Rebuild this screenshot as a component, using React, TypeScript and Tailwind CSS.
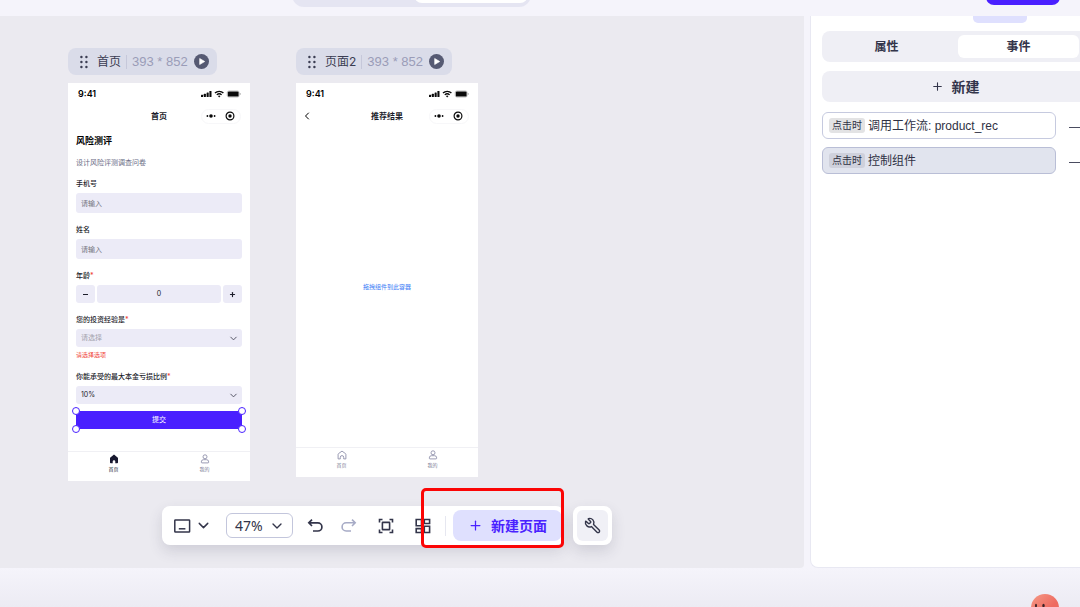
import { ChevronDown, ChevronLeft, Plus, Wrench } from "lucide-react";
import clsx from "clsx";

interface PhoneProps {
  title: string;
  back?: boolean;
  homeActive?: boolean;
  children: React.ReactNode;
}

interface PageChipProps {
  name: string;
}

interface FieldProps {
  id: string;
  label: string;
  required?: boolean;
  children: React.ReactNode;
}

const events = [
  { id: "workflow", trigger: "点击时", label: "调用工作流: product_rec", active: false },
  { id: "control", trigger: "点击时", label: "控制组件", active: true },
];

function SignalIcons() {
  return (
    <svg width="40" height="8" viewBox="0 0 40 8" fill="#0a0a0a" aria-hidden="true">
      <rect x="0" y="4.8" width="2.1" height="2.2" rx=".5" />
      <rect x="2.8" y="3.8" width="2.1" height="3.2" rx=".5" />
      <rect x="5.6" y="2.4" width="2.1" height="4.6" rx=".5" />
      <rect x="8.4" y="1" width="2.1" height="6" rx=".5" />
      <path d="M14 3.1a6 6 0 0 1 8.4 0" fill="none" stroke="#0a0a0a" strokeWidth="1.4" />
      <path d="M15.8 4.9a3.4 3.4 0 0 1 4.8 0" fill="none" stroke="#0a0a0a" strokeWidth="1.3" />
      <path d="M16.9 6l1.3 1.4L19.5 6a1.9 1.9 0 0 0-2.6 0z" />
      <rect x="26.2" y=".9" width="12" height="6.2" rx="1.8" fill="none" stroke="#a3a3a3" strokeWidth=".6" />
      <rect x="26.8" y="1.4" width="10.8" height="5.2" rx="1.2" />
      <rect x="38.8" y="3" width=".8" height="2" rx=".4" fill="#a3a3a3" />
    </svg>
  );
}

function Capsule() {
  return (
    <div className="h-[15px] w-10 flex items-center justify-around rounded-full border border-[#f7f7f9] bg-white">
      <svg width="10" height="10" viewBox="0 0 10 10" fill="#0a0a0a" aria-hidden="true">
        <circle cx="1.4" cy="5" r=".9" />
        <circle cx="5" cy="5" r="1.8" />
        <circle cx="8.6" cy="5" r=".9" />
      </svg>
      <svg width="10" height="10" viewBox="0 0 10 10" aria-hidden="true">
        <circle cx="5" cy="5" r="3.9" fill="none" stroke="#0a0a0a" strokeWidth="1.2" />
        <circle cx="5" cy="5" r="1.7" fill="#0a0a0a" />
      </svg>
    </div>
  );
}

function HomeIcon({ active }: { active?: boolean }) {
  return (
    <svg width="10" height="10" viewBox="0 0 10 10" aria-hidden="true">
      {active ? (
        <path d="M5 .6 1.4 3.4a1 1 0 0 0-.4.8v4.2a.8.8 0 0 0 .8.8h1.9V7.5a1.3 1.3 0 0 1 2.6 0v1.7h1.9a.8.8 0 0 0 .8-.8V4.2a1 1 0 0 0-.4-.8z" fill="#17182f" />
      ) : (
        <path
          d="M5 1.1 1.4 3.7a.8.8 0 0 0-.3.6v4.6h2.2V7.3a1.7 1.7 0 0 1 3.4 0v1.6h2.2V4.3a.8.8 0 0 0-.3-.6z"
          fill="none"
          stroke="#8f90aa"
          strokeWidth=".9"
          strokeLinejoin="round"
        />
      )}
    </svg>
  );
}

function UserIcon() {
  return (
    <svg width="10" height="10" viewBox="0 0 10 10" fill="none" stroke="#8f90aa" strokeWidth=".9" aria-hidden="true">
      <circle cx="5" cy="2.8" r="2" />
      <path d="M3.5 5.7h3a2.2 2.2 0 0 1 2.2 2.2v.3a.7.7 0 0 1-.7.7H2a.7.7 0 0 1-.7-.7v-.3a2.2 2.2 0 0 1 2.2-2.2z" />
    </svg>
  );
}

function PageChip({ name }: PageChipProps) {
  return (
    <div className="h-[27px] self-start flex items-center rounded-lg bg-[#dadce9] px-2 text-[12px] leading-4">
      <svg width="16" height="16" viewBox="0 0 16 16" fill="#3b3d52" aria-hidden="true">
        {[3, 8, 13].map((y) => (
          <g key={y}>
            <circle cx="5.4" cy={y} r="1.2" />
            <circle cx="10.4" cy={y} r="1.2" />
          </g>
        ))}
      </svg>
      <span className="ml-[5px] text-[#3b3d52]">{name}</span>
      <span className="mx-[5px] h-[14px] w-px bg-[#c6c8da]" />
      <span className="text-[#9a9cb8] font-['Liberation_Sans'] text-[13px]">393 * 852</span>
      <button type="button" aria-label="预览" className="ml-[6px]">
        <svg width="15" height="15" viewBox="0 0 14 14" aria-hidden="true">
          <circle cx="7" cy="7" r="7" fill="#565a73" />
          <path d="M5.3 4.2v5.6L10 7z" fill="#fff" stroke="#fff" strokeWidth=".6" strokeLinejoin="round" />
        </svg>
      </button>
    </div>
  );
}

function Phone({ title, back, homeActive, children }: PhoneProps) {
  return (
    <div className="w-[182px] flex flex-col bg-white">
      <div className="h-[22px] flex items-center justify-between pl-[10px] pr-[9px]">
        <span className="text-[9px] leading-3 font-semibold text-black">9:41</span>
        <SignalIcons />
      </div>
      <div className="h-[22px] grid grid-cols-3 items-center px-[5px]">
        <span>{back && <ChevronLeft size={12} strokeWidth={2} className="text-black" />}</span>
        <span className="text-center text-[8px] leading-3 font-bold text-[#1c1d2b]">{title}</span>
        <span className="flex justify-end pr-1">
          <Capsule />
        </span>
      </div>
      {children}
      <nav className="h-[30px] grid grid-cols-2 border-t border-[#f0f0f4] text-[5px] leading-[6px]">
        <a
          href="#home"
          className={clsx("flex flex-col items-center gap-[2px] pt-[2px]", homeActive ? "text-[#17182f]" : "text-[#7b7c96]")}
        >
          <HomeIcon active={homeActive} />
          首页
        </a>
        <a href="#mine" className="flex flex-col items-center gap-[2px] pt-[2px] text-[#7b7c96]">
          <UserIcon />
          我的
        </a>
      </nav>
    </div>
  );
}

function Field({ id, label, required, children }: FieldProps) {
  return (
    <div className="flex flex-col gap-[3px]">
      <label htmlFor={id} className="text-[7px] leading-3 font-medium text-[#1c1d2b]">
        {label}
        {required && <span className="text-[#f04438]">*</span>}
      </label>
      {children}
    </div>
  );
}

function SelectBox({ id, value, muted }: { id: string; value: string; muted?: boolean }) {
  return (
    <div className="grid items-center">
      <select
        id={id}
        className={clsx(
          "col-start-1 row-start-1 h-[18px] w-full appearance-none rounded-[3px] bg-[#ecebf7] px-[5px] text-[7px] leading-3",
          muted ? "text-[#a3a3ad]" : "text-[#1c1d2b]"
        )}
      >
        <option>{value}</option>
      </select>
      <ChevronDown size={11} strokeWidth={2} className="col-start-1 row-start-1 justify-self-end mr-[3px] text-[#4a4b5c] pointer-events-none" />
    </div>
  );
}

function Handle({ className }: { className: string }) {
  return <span className={clsx("absolute size-2 rounded-full border border-[#4a22ff] bg-white", className)} />;
}

function SurveyForm() {
  return (
    <form className="flex-1 flex flex-col px-2 pt-[7px] pb-[22px]">
      <h2 className="text-[9px] leading-[14px] font-bold text-black">风险测评</h2>
      <p className="my-[9px] text-[7px] leading-3 text-[#6b6d85]">设计风险评测调查问卷</p>
      <div className="flex flex-col gap-[11px]">
        <Field id="phone" label="手机号">
          <input
            id="phone"
            placeholder="请输入"
            className="h-5 rounded-[3px] bg-[#ecebf7] px-[5px] text-[7px] leading-3 placeholder:text-[#757580]"
          />
        </Field>
        <Field id="name" label="姓名">
          <input
            id="name"
            placeholder="请输入"
            className="h-5 rounded-[3px] bg-[#ecebf7] px-[5px] text-[7px] leading-3 placeholder:text-[#757580]"
          />
        </Field>
        <Field id="age" label="年龄" required>
          <div className="h-[18px] flex gap-[2px] text-[#1c1d2b]">
            <button type="button" aria-label="减少" className="w-[19px] flex items-center justify-center rounded-[3px] bg-[#ecebf7]">
              <span className="h-px w-[5px] bg-[#1c1d2b]" />
            </button>
            <input id="age" defaultValue="0" className="min-w-0 flex-1 rounded-[3px] bg-[#ecebf7] text-center text-[7px] leading-3" />
            <button type="button" aria-label="增加" className="w-[19px] flex items-center justify-center rounded-[3px] bg-[#ecebf7]">
              <Plus size={7} strokeWidth={4} />
            </button>
          </div>
        </Field>
        <div>
          <Field id="experience" label="您的投资经验是" required>
            <SelectBox id="experience" value="请选择" muted />
          </Field>
          <p className="mt-[3px] text-[6px] leading-[10px] text-[#f04438]">请选择选项</p>
        </div>
        <Field id="loss" label="你能承受的最大本金亏损比例" required>
          <SelectBox id="loss" value="10%" />
        </Field>
      </div>
      <div className="relative mt-[7px] flex">
        <button type="button" className="h-[18px] flex-1 bg-[#4a1fff] text-[7px] leading-3 text-white">
          提交
        </button>
        <Handle className="-left-1 -top-1" />
        <Handle className="-right-1 -top-1" />
        <Handle className="-left-1 -bottom-1" />
        <Handle className="-right-1 -bottom-1" />
      </div>
    </form>
  );
}

function Toolbar() {
  return (
    <div className="relative flex gap-[9px] self-start">
      <div className="h-[39px] w-[402px] flex items-center rounded-lg bg-white pl-[11px] pr-[2px] text-[#33354a] shadow-[0_6px_14px_rgba(60,60,90,0.16)]">
        <button type="button" aria-label="设备" className="flex items-center gap-1">
          <svg width="18" height="18" viewBox="0 0 18 18" fill="none" stroke="currentColor" strokeWidth="1.5" aria-hidden="true">
            <rect x="1.8" y="3" width="14.8" height="12" rx=".6" />
            <path d="M5.8 11.8h6.6" />
          </svg>
          <ChevronDown size={17} strokeWidth={2} />
        </button>
        <button
          type="button"
          className="ml-[14px] h-[25px] w-[67px] flex items-center justify-between rounded-md border border-[#c3c6dc] pl-2 pr-[7px] font-['Noto_Sans'] text-[14px] leading-5"
        >
          47%
          <ChevronDown size={16} strokeWidth={2} />
        </button>
        <button type="button" aria-label="撤销" className="ml-[13px]">
          <svg width="18" height="18" viewBox="0 0 18 18" fill="none" stroke="currentColor" strokeWidth="1.7" aria-hidden="true">
            <path d="M6 2.6 2.8 5.8 6 9M3 5.800h8.800a4 4 0 0 1 0 8.200H7" />
          </svg>
        </button>
        <button type="button" aria-label="重做" className="ml-4 text-[#a7abc6]">
          <svg width="18" height="18" viewBox="0 0 18 18" fill="none" stroke="currentColor" strokeWidth="1.6" aria-hidden="true">
            <path d="m12 2.6 3.200 3.200L12 9M15 5.800H6.200a4 4 0 0 0 0 8.200H11" />
          </svg>
        </button>
        <button type="button" aria-label="适应画布" className="ml-[19px]">
          <svg width="18" height="18" viewBox="0 0 18 18" fill="none" stroke="currentColor" strokeWidth="1.6" aria-hidden="true">
            <rect x="5.4" y="5.4" width="7.200" height="7.200" rx=".4" />
            <path d="M2.5 5.500v-3h3M12.500 2.500h3v3M15.500 12.500v3h-3M5.500 15.500h-3v-3" />
          </svg>
        </button>
        <button type="button" aria-label="布局" className="ml-[19px]">
          <svg width="18" height="18" viewBox="0 0 18 18" fill="none" stroke="currentColor" strokeWidth="1.6" aria-hidden="true">
            <path d="M2.200 2.500h5.300v6.300H2.200zM10.300 2.500h5.300v4h-5.300zM10.300 9.300h5.300v6.200h-5.300zM2.200 11.600h5.300v3.900H2.200z" />
          </svg>
        </button>
        <span className="ml-[13px] h-5 w-px bg-[#e6e7f0]" />
        <button
          type="button"
          className="ml-auto h-[31px] w-[109px] flex items-center justify-center gap-2 rounded-lg bg-[#dfe0fe] text-[14px] leading-5 font-bold text-[#4a22ff]"
        >
          <Plus size={15} strokeWidth={2} />
          新建页面
        </button>
      </div>
      <div className="size-[39px] flex items-center justify-center rounded-lg bg-white shadow-[0_6px_14px_rgba(60,60,90,0.16)]">
        <button type="button" aria-label="工具" className="size-[31px] flex items-center justify-center rounded-md bg-[#f0f0f6] text-[#33354a]">
          <Wrench size={17} strokeWidth={2} className="-scale-x-100" />
        </button>
      </div>
      {/* highlight around the new-page action */}
      <div className="absolute -top-[18px] left-[259px] h-[60px] w-[143px] rounded-[5px] border-[3px] border-[#fb0505] pointer-events-none" />
    </div>
  );
}

function EventPanel() {
  return (
    <aside className="w-[270px] shrink-0 overflow-hidden rounded-bl-lg border-l border-b border-[#e8e8f2] bg-white">
      <div className="w-[289px] flex flex-col pl-[11px] pr-3">
        <div className="h-[7px] pl-[151px]">
          <div className="h-full w-[54px] rounded-b-[5px] bg-[#dfe0fe]" />
        </div>
        <div
          role="tablist"
          className="mt-2 h-[31px] flex gap-[11px] rounded-lg bg-[#efeff5] p-1 pr-[9px] text-[12px] leading-4 font-bold text-[#33354a]"
        >
          <button type="button" role="tab" aria-selected="false" className="flex-1">
            属性
          </button>
          <button type="button" role="tab" aria-selected="true" className="flex-1 rounded-md bg-white">
            事件
          </button>
        </div>
        <button
          type="button"
          className="mt-[9px] h-[31px] flex items-center justify-center gap-2 rounded-lg bg-[#efeff5] text-[14px] leading-5 font-bold text-[#33354a]"
        >
          <Plus size={13} strokeWidth={2} />
          新建
        </button>
        <ul className="mt-[10px] flex flex-col gap-2">
          {events.map((event) => (
            <li key={event.id} className="flex items-center gap-[13px]">
              <button
                type="button"
                className={clsx(
                  "h-[27px] w-[234px] flex items-center gap-[3px] rounded-md border px-[6px] font-['Liberation_Sans','Noto_Sans_CJK_SC',sans-serif] text-[12px] leading-4 text-[#2f3144]",
                  event.active ? "border-[#b9bed6] bg-[#e1e4ee]" : "border-[#c6cadf] bg-white"
                )}
              >
                <span
                  className={clsx("rounded-[3px] px-[3px] text-[10px] leading-[15px]", event.active ? "bg-[#cfd1dc]" : "bg-[#e3e3e4]")}
                >
                  {event.trigger}
                </span>
                {event.label}
              </button>
              <button type="button" aria-label="删除" className="pt-[3px]">
                <span className="block h-px w-3 bg-[#4a4c60]" />
              </button>
            </li>
          ))}
        </ul>
      </div>
    </aside>
  );
}

function Mascot() {
  return (
    <svg width="28" height="28" viewBox="0 0 28 28" aria-hidden="true">
      <defs>
        <linearGradient id="mascot" x1="0" y1="0" x2="1" y2="1">
          <stop offset="0" stopColor="#f59a87" />
          <stop offset="0.6" stopColor="#ee6a60" />
        </linearGradient>
      </defs>
      <circle cx="14" cy="14" r="14" fill="url(#mascot)" />
      <ellipse cx="5" cy="11.5" rx="1" ry="1.8" fill="#3a2226" />
      <ellipse cx="12.5" cy="11.5" rx="1.2" ry="1.8" fill="#3a2226" />
    </svg>
  );
}

export default function App() {
  return (
    <div className="h-screen flex flex-col overflow-hidden bg-[#f5f4fb] font-['Inter','Noto_Sans_CJK_SC',sans-serif]">
      <header className="h-4 shrink-0 flex items-end overflow-hidden pl-[292px] pr-5">
        <div className="mb-[9px] h-8 w-[239px] flex shrink-0 justify-end rounded-xl bg-[#e5e5f2] p-[3px] pb-1">
          <button type="button" aria-label="页面" className="w-[114px] rounded-lg bg-white" />
        </div>
        <button type="button" aria-label="发布" className="mb-[11px] ml-auto h-8 w-[74px] shrink-0 rounded-lg bg-[#4a1fff]" />
      </header>
      <div className="flex-1 min-h-0 flex gap-[6px]">
        <main className="flex-1 min-w-0 flex flex-col justify-between overflow-hidden rounded-br bg-[#ebeaf0] pt-8 pb-[23px]">
          <div className="flex items-start gap-[46px] pl-[68px]">
            <section className="flex flex-col gap-2">
              <PageChip name="首页" />
              <Phone title="首页" homeActive>
                <SurveyForm />
              </Phone>
            </section>
            <section className="flex flex-col gap-2">
              <PageChip name="页面2" />
              <Phone title="推荐结果" back>
                <div className="h-80 flex items-center justify-center text-[6px] leading-[10px] text-[#3b7bf6]">拖拽组件到此容器</div>
              </Phone>
            </section>
          </div>
          <div className="flex pl-[162px]">
            <Toolbar />
          </div>
        </main>
        <EventPanel />
      </div>
      <footer className="h-[39px] shrink-0 flex justify-end overflow-hidden bg-linear-to-b from-[#f5f4fb] to-[#ecebf3] pt-[26px] pr-[21px]">
        <Mascot />
      </footer>
    </div>
  );
}
